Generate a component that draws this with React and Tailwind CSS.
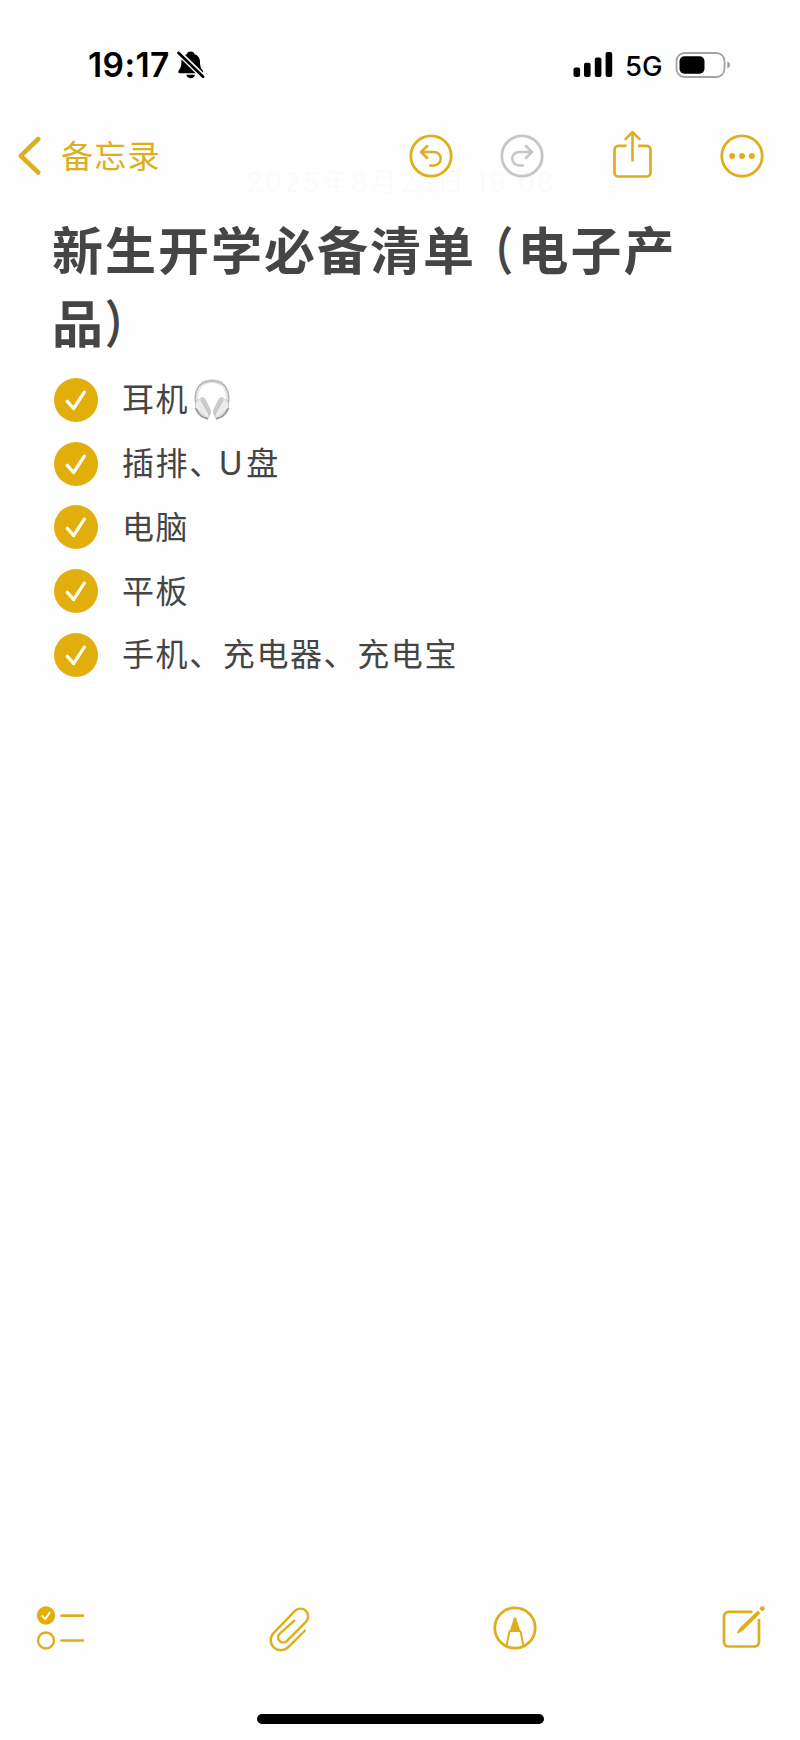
import React from 'react'

const items = [
    { id: 1, text: '耳机', headphones: true },
    { id: 2, text: '插排', latin: 'U', rest: '盘' },
    { id: 3, text: '电脑' },
    { id: 4, text: '平板' },
    { id: 5, text: '手机、充电器、充电宝' },
]

const BellOff = () => (
    <svg className="w-[30px] h-[32px]" viewBox="0 0 30 32">
        <path fill="#000" d="M14.600 2.500c-2.200 0-3.600 1.200-3.900 2.700C7.400 6.300 5.400 9 5.400 12.500c0 4.800-.9 6.600-2.600 8.800-1 1.300-.7 2.900 1.100 2.900h21.600c1.800 0 2.100-1.600 1.100-2.900-1.700-2.200-2.600-4-2.600-8.800 0-3.500-2-6.200-5.400-7.300-.3-1.500-1.700-2.700-4-2.700z" />
        <path fill="#000" d="M10.400 25.800h8.600c-.4 2.200-2 3.500-4.300 3.500s-3.900-1.300-4.300-3.500z" />
        <path stroke="#fefefe" strokeWidth="5.600" d="M1.500 2.500l26 25.500" />
        <path stroke="#000" strokeWidth="2.600" strokeLinecap="round" d="M2.400 3.800l24.700 24" />
    </svg>
)

const Signal = () => (
    <svg className="w-10 h-[26px]" viewBox="0 0 40 26">
        <rect x="0.500" y="15.500" width="6.600" height="9.500" rx="2" />
        <rect x="11" y="10.800" width="6.600" height="14.200" rx="2" />
        <rect x="21.800" y="5.500" width="6.600" height="19.500" rx="2" />
        <rect x="32.600" y="0" width="6.600" height="25" rx="2" />
    </svg>
)

const Battery = () => (
    <svg className="w-[56px] h-[26px]" viewBox="0 0 56 26" fill="none">
        <rect x="1.500" y="1" width="48" height="24" rx="8" stroke="#a3a3a3" strokeWidth="1.800" />
        <rect x="4.500" y="4.200" width="25" height="17.600" rx="5" fill="#000" />
        <path d="M52.300 9.500c1.700.6 2.700 1.900 2.700 3.500s-1 2.900-2.700 3.500z" fill="#a3a3a3" />
    </svg>
)

const Undo = ({ className }) => (
    <svg className={className} viewBox="0 0 44 44" fill="none" stroke="currentColor" strokeLinecap="round" strokeLinejoin="round">
        <circle cx="22" cy="22" r="20.200" strokeWidth="2.800" />
        <path strokeWidth="2.500" d="M18.200 12L12 18l6.200 6M12.500 18H25a6.600 6.600 0 010 13.400h-3.800" />
    </svg>
)

const Share = () => (
    <svg className="w-10 h-[50px]" viewBox="0 0 40 50" fill="none" stroke="currentColor" strokeWidth="2.700" strokeLinecap="round" strokeLinejoin="round">
        <path strokeLinecap="butt" d="M14.500 15.800H6.500a4 4 0 00-4 4V42.500a4 4 0 004 4h28a4 4 0 004-4V19.800a4 4 0 00-4-4h-8.500" />
        <path strokeWidth="2.600" d="M20.500 30.500V2.500M13.500 9.200l7-7 7 7" />
    </svg>
)

const More = () => (
    <svg className="w-11 h-11" viewBox="0 0 44 44">
        <circle cx="22" cy="22" r="20.200" fill="none" stroke="currentColor" strokeWidth="2.800" />
        <circle cx="12.200" cy="22" r="3" fill="currentColor" />
        <circle cx="22" cy="22" r="3" fill="currentColor" />
        <circle cx="31.800" cy="22" r="3" fill="currentColor" />
    </svg>
)

const Check = () => (
    <svg className="w-11 h-11 shrink-0" viewBox="0 0 44 44" fill="none">
        <circle cx="22" cy="22" r="22" fill="#e2ae0b" />
        <path d="M13.300 23.300l6.300 7.200 10.700-16.300" stroke="#fffdf2" strokeWidth="3.300" strokeLinecap="round" strokeLinejoin="round" />
    </svg>
)

const Headphones = () => (
    <svg className="w-[36px] h-[41px] ml-[5px]" viewBox="0 0 36 41" fill="none">
        <path d="M1.800 24C-.5 10 7 1.500 18 1.500S36.500 10 34.200 24" stroke="#b0b0b0" strokeWidth="1.600" />
        <path d="M3.500 22C2 10.500 8.500 3.200 18 3.200S34 10.500 32.500 22" stroke="#e4e4e4" strokeWidth="1.600" />
        <path d="M8 4.600C13 .8 23 .8 28 4.600" stroke="#c2c2c2" strokeWidth="2.600" />
        <path d="M6 19c2.200-1.600 4.500-.6 5.600 1.400l4.600 9.100c1.400 3 .8 6-1.500 8.600z" fill="#cbcbcb" />
        <path d="M2.400 22.500c1.600-2.400 4-2.300 5.500 0l6.300 11.400c1.500 2.700.5 4.500-.7 5.600L1.900 30.200c-.9-2.500-.8-5.600.5-7.700z" fill="#ececec" stroke="#bababa" strokeWidth=".8" />
        <path d="M2 29.800c2 4.700 6.500 9.100 11.300 9.800" stroke="#999" strokeWidth="2" strokeLinecap="round" />
        <path d="M30 19c-2.200-1.600-4.500-.6-5.600 1.400l-4.600 9.100c-1.400 3-.8 6 1.500 8.600z" fill="#cbcbcb" />
        <path d="M33.600 22.500c-1.600-2.400-4-2.300-5.500 0l-6.300 11.400c-1.500 2.700-.5 4.500.7 5.600l11.600-9.300c.9-2.500.8-5.600-.5-7.700z" fill="#ececec" stroke="#bababa" strokeWidth=".8" />
        <path d="M34 29.800c-2 4.700-6.500 9.100-11.300 9.800" stroke="#999" strokeWidth="2" strokeLinecap="round" />
    </svg>
)

const Checklist = () => (
    <svg className="w-[50px] h-[46px]" viewBox="0 0 50 46" fill="none" strokeLinecap="round" strokeLinejoin="round">
        <circle cx="10" cy="10.500" r="9.200" fill="#e2ae0b" />
        <path d="M6.300 11l2.900 3.200L13.700 7.500" stroke="#fffbe6" strokeWidth="1.900" />
        <circle cx="10" cy="35.500" r="8" stroke="currentColor" strokeWidth="2.400" />
        <path d="M25.500 10.700h21.500M25.500 35.500h21.500" stroke="currentColor" strokeWidth="2.700" />
    </svg>
)

const Paperclip = () => (
    <svg className="w-[42px] h-[48px]" viewBox="0 0 42 48" fill="none" stroke="currentColor" strokeWidth="2.400" strokeLinecap="round" strokeLinejoin="round">
        <path d="M36 25.500L19.300 42.200C15.300 46.100 9 46.200 5 42.600C.8 38.600.7 32.200 4.500 28.200L25.700 6.200C28.800 3 33.700 2.800 36.900 5.800C40 8.800 39.900 13.700 36.900 16.900L18 35.900C15.900 38 12.700 38.100 10.700 36.200C8.500 34.200 8.500 30.900 10.500 28.800L25.300 15.600" />
    </svg>
)

const Markup = () => (
    <svg className="w-11 h-11" viewBox="0 0 44 44" fill="none" stroke="currentColor">
        <circle cx="22" cy="22" r="20.200" strokeWidth="2.800" />
        <path fill="currentColor" stroke="none" d="M20.800 12.300c.5-1.400 1.900-1.400 2.400 0L27.600 26H16.400z" />
        <path strokeWidth="2" d="M13.600 39.500l2.600-13q.3-1.500 1.700-1.500h8.200q1.400 0 1.700 1.500L30.400 39.500" />
    </svg>
)

const Compose = () => (
    <svg className="w-[44px] h-[46px]" viewBox="0 0 44 46" fill="none" stroke="currentColor">
        <path strokeWidth="2.700" d="M30.500 6.900H6.500a4.500 4.500 0 00-4.500 4.500v25.600a4.500 4.500 0 004.500 4.500h26a4.500 4.500 0 004.500-4.500V14" />
        <path stroke="none" fill="currentColor" d="M35.800 5.600l2.600 2.600L20.500 25.900l-4.900 2.600c-.6.300-1-.1-.7-.7l2.800-4.700z" />
        <circle cx="40.300" cy="3.600" r="2.400" stroke="none" fill="currentColor" />
    </svg>
)

export default function App() {
    return (
        <div className="w-[800px] h-[1740px] bg-[#fefefe] flex flex-col overflow-hidden font-['Inter','Noto_Sans_CJK_SC',sans-serif] text-[#454545]">
            {/* Status bar */}
            <div className="h-[130px] pl-[88px] pr-[69px] flex items-center justify-between text-black">
                <div className="flex items-center gap-[2px]">
                    <span className="w-[86px] mt-px text-[33.500px] leading-none font-semibold tracking-[0.400px] whitespace-nowrap">19:17</span>
                    <BellOff />
                </div>
                <div className="flex items-center">
                    <Signal />
                    <span className="ml-[12px] mt-[3px] w-[37px] text-[27.500px] leading-none font-medium whitespace-nowrap">5G</span>
                    <span className="ml-[13px]"><Battery /></span>
                </div>
            </div>

            {/* Navigation */}
            <div className="relative h-[76px] flex items-start text-[#ddae1f]">
                <p className="absolute left-[246px] top-[37px] text-[27px] leading-[32px] font-light tracking-[2.400px] text-[#fafafa] whitespace-nowrap">2025年8月23日 19:08</p>
                <svg className="relative mt-[5px] ml-[16px] w-[26px] h-[42px]" viewBox="0 0 26 42" fill="none" stroke="currentColor" strokeWidth="4.600" strokeLinecap="round" strokeLinejoin="round">
                    <path d="M22.300 4L4.800 20.800 22.300 37.500" />
                </svg>
                <span className="relative mt-px ml-[19px] w-[348px] text-[32px] leading-[52px] tracking-[1.200px]">备忘录</span>
                <Undo className="relative mt-1 w-11 h-11" />
                <Undo className="relative mt-1 ml-[47px] w-11 h-11 text-[#c6c6c6] -scale-x-100" />
                <span className="ml-[68px]"><Share /></span>
                <span className="ml-[68px] mt-[4px]"><More /></span>
            </div>

            {/* Note */}
            <div className="flex-1 pl-[52px]">
                <h1 className="mt-[9px] text-[51px] leading-[73px] font-bold tracking-[2px] whitespace-nowrap">
                    新生开学必备清单<span className="inline-block origin-center scale-x-80 ml-[14px] [font-feature-settings:'halt']">（</span>电子产<br />品<span className="inline-block origin-left scale-x-80 [font-feature-settings:'halt']">）</span>
                </h1>
                <ul className="mt-[7px] ml-[2px]">
                    {items.map(item => (
                        <li key={item.id} className="h-[63.750px] flex items-center">
                            <Check />
                            <span className="mt-px ml-6 flex items-center text-[32px] leading-none tracking-[1.600px]">
                                {item.text}
                                {item.latin && <span className="[font-feature-settings:'halt']">、</span>}
                                {item.latin && <span className="ml-[12px] mr-[2px]">{item.latin}</span>}
                                {item.rest}
                            </span>
                            {item.headphones && <Headphones />}
                        </li>
                    ))}
                </ul>
            </div>

            {/* Toolbar */}
            <div className="h-[109px] pl-9 pr-[34px] flex items-start text-[#ddae1f]">
                <Checklist />
                <span className="ml-[183px]"><Paperclip /></span>
                <span className="ml-[182px] mt-px"><Markup /></span>
                <span className="ml-auto"><Compose /></span>
            </div>
            <div className="mb-4 mx-auto w-[287px] h-[10px] rounded-full bg-black shrink-0" />
        </div>
    )
}
